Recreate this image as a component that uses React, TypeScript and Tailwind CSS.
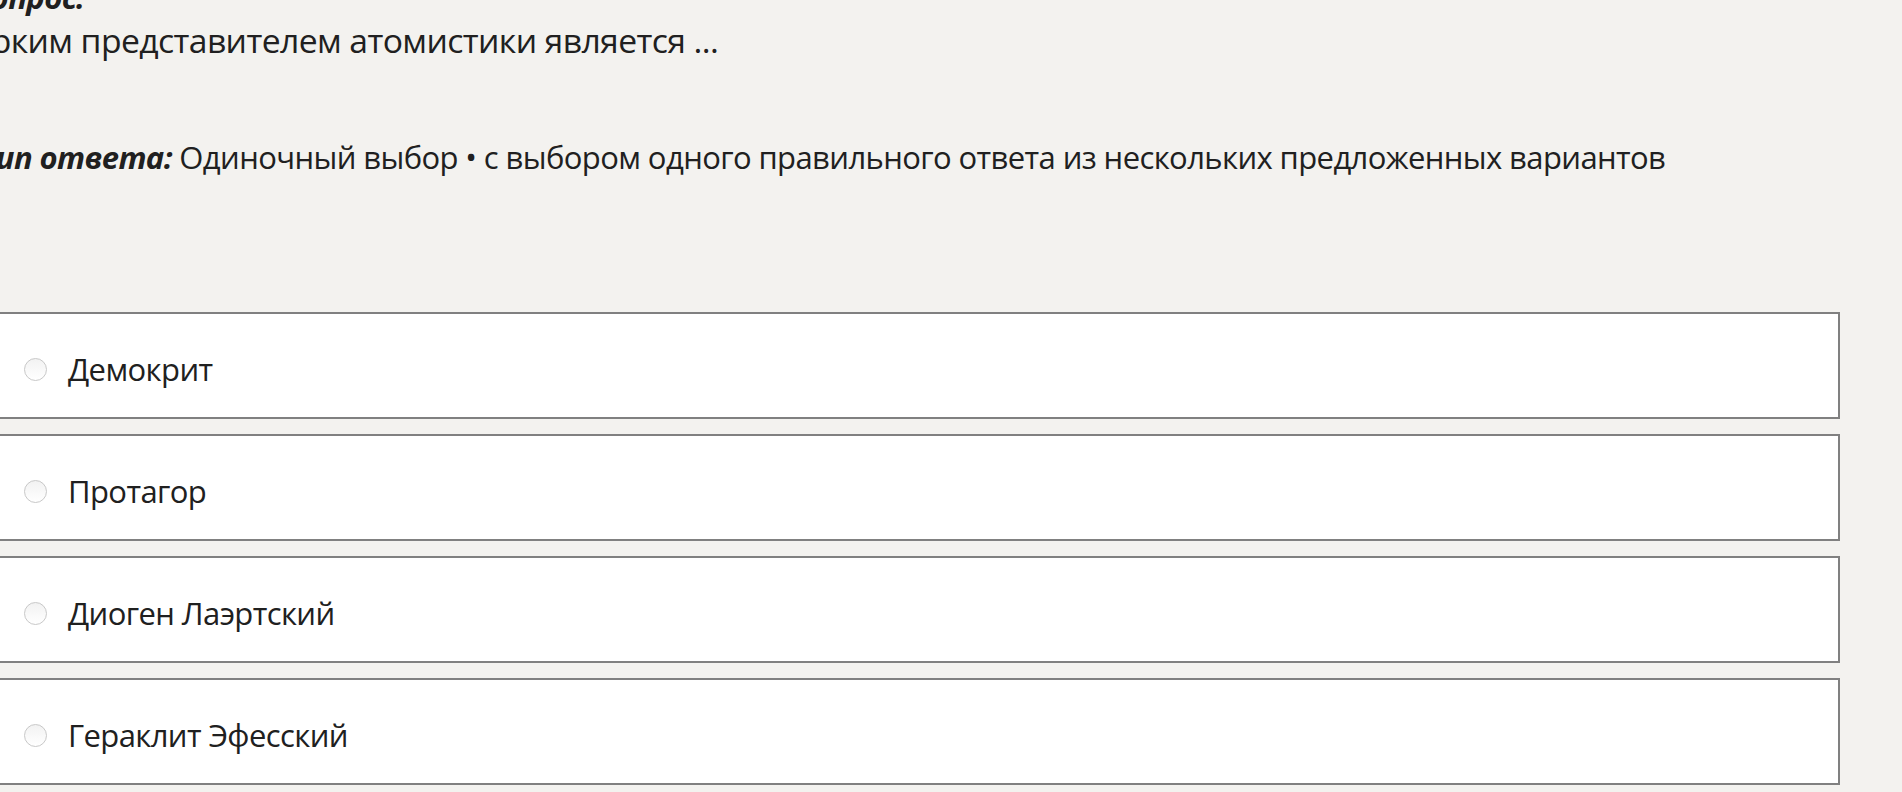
import React, { useState } from 'react';

const options = ['Демокрит', 'Протагор', 'Диоген Лаэртский', 'Гераклит Эфесский'];

export default function App() {
  const [selected, setSelected] = useState<number | null>(null);

  return (
    <div className="min-h-screen overflow-hidden bg-[#f3f2ef] text-[#202020] font-['Open_Sans','Noto_Sans',sans-serif]">
      <div className="-ml-[20px] -mt-[24px] w-[1860px] text-[31px] leading-[43px] tracking-[-0.6px]">
        <p className="-ml-[8px] font-bold italic">Вопрос:</p>
        <p className="-ml-[10px] text-[33.7px]">Ярким представителем атомистики является ...</p>

        <p className="mt-[74px]">
          <span className="font-bold italic">Тип ответа:</span> Одиночный выбор • с выбором одного правильного ответа из нескольких предложенных вариантов
        </p>

        <div className="mt-[133px] flex flex-col gap-[15px]">
          {options.map((opt, i) => (
            <label
              key={opt}
              onClick={() => setSelected(i)}
              className="flex h-[107px] cursor-pointer items-center border-2 border-[#808080] bg-white pl-[42px] pt-[8px]"
            >
              <span className="flex h-[23px] w-[23px] shrink-0 items-center justify-center rounded-full border border-[#c8c8c8] bg-gradient-to-b from-[#f2f2f2] to-white">
                {selected === i && <span className="h-[11px] w-[11px] rounded-full bg-[#444]" />}
              </span>
              <span className="ml-[21px]">{opt}</span>
            </label>
          ))}
        </div>
      </div>
    </div>
  );
}
